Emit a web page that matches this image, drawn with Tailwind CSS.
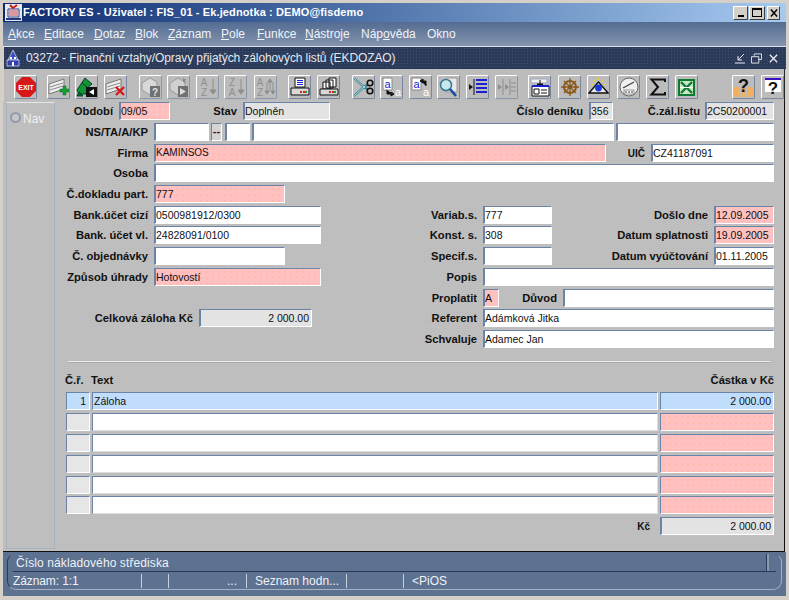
<!DOCTYPE html>
<html lang="en">
<head>
    <meta charset="UTF-8">
    <script src="https://cdn.jsdelivr.net/npm/@tailwindcss/browser@4"></script>
    <title>FACTORY ES</title>
</head>
<body class="w-[789px] h-[600px] overflow-hidden bg-[#d4d0c8] font-['Liberation_Sans',Arial,sans-serif] text-[11px] text-[#111]">
<div class="pt-[3px] pl-[3px] h-[600px] flex flex-col">

    <!-- Application title bar -->
    <div class="h-[19px] mr-[3px] flex items-center bg-gradient-to-r from-[#0f2a70] via-[#5579ae] to-[#a6caf0]">
        <svg class="w-[17px] h-[17px] ml-[2px]" viewBox="0 0 17 17">
            <rect width="17" height="17" fill="#e8e8e8"/>
            <path d="M3 5h11v8H3z" fill="#fff" stroke="#223a80"/>
            <path d="M4 7h9M4 9h9M4 11h9" stroke="#c03040"/>
            <path d="M5 1l3 3 4-3" stroke="#c02020" fill="none" stroke-width="2"/>
            <path d="M1 14h15v2H1z" fill="#223a80"/>
        </svg>
        <span class="ml-[1px] text-white font-bold text-[11px] tracking-[0.12px]">FACTORY ES - Uživatel : FIS_01 - Ek.jednotka : DEMO@fisdemo</span>
        <div class="ml-auto mr-[6px] flex">
            <div class="w-[15px] h-[14px] bg-[#d4d0c8] border border-t-white border-l-white border-r-[#404040] border-b-[#404040] flex items-end justify-center pb-[2px]"><div class="w-[6px] h-[2px] bg-black"></div></div>
            <div class="w-[16px] h-[14px] ml-[1px] bg-[#d4d0c8] border border-t-white border-l-white border-r-[#404040] border-b-[#404040] flex items-center justify-center"><div class="w-[10px] h-[9px] border border-black border-t-2"></div></div>
            <div class="w-[13px] h-[14px] ml-[2px] bg-[#d4d0c8] border border-t-white border-l-white border-r-[#404040] border-b-[#404040] flex items-center justify-center">
                <svg class="w-[8px] h-[8px]" viewBox="0 0 9 8"><path d="M1 0l7 8M8 0L1 8" stroke="#000" stroke-width="1.6"/></svg>
            </div>
        </div>
    </div>

    <!-- Menu -->
    <div class="h-[25px] mr-[3px] flex items-center bg-gradient-to-b from-[#546c92] to-[#8494ad] border-b border-[#dfe3ea] text-[12px] text-[#f0f3f7]">
        <span class="ml-[5px] w-[36px]"><u>A</u>kce</span>
        <span class="w-[50px]"><u>E</u>ditace</span>
        <span class="w-[41px]"><u>D</u>otaz</span>
        <span class="w-[33px]"><u>B</u>lok</span>
        <span class="w-[53px]"><u>Z</u>áznam</span>
        <span class="w-[36px]"><u>P</u>ole</span>
        <span class="w-[48px]"><u>F</u>unkce</span>
        <span class="w-[56px]"><u>N</u>ástroje</span>
        <span class="w-[66px]">Náp<u>o</u>věda</span>
        <span>Okno</span>
    </div>

    <!-- Form window title -->
    <div class="h-[22px] mr-[3px] ml-[1px] flex items-center bg-[#2b3a58] bg-[radial-gradient(#3e5074_0.6px,transparent_0.8px)] bg-[size:3px_3px] text-[12px] text-[#e4e8ee]">
        <svg class="w-[14px] h-[17px] ml-[2px]" viewBox="0 0 14 17">
            <path d="M7 0L2 10h10z" fill="#3a50c0" stroke="#fff" stroke-width=".6"/>
            <rect x="1" y="10" width="12" height="6" fill="#3040b0" stroke="#fff" stroke-width=".6"/>
            <path d="M4 7h2v2H4zM8 7h2v2H8zM6 12h2v4H6z" fill="#fff"/>
        </svg>
        <span class="ml-[6px] tracking-[-0.1px]">03272 - Finanční vztahy/Opravy přijatých zálohových listů (EKDOZAO)</span>
        <div class="ml-auto mr-[8px] flex items-center">
            <svg class="w-[10px] h-[11px]" viewBox="0 0 10 11"><path d="M0 10h10M9 1L3 7M3 3v4h4" stroke="#e8ecf2" fill="none"/></svg>
            <svg class="w-[11px] h-[11px] ml-[6px]" viewBox="0 0 12 11"><path d="M3.5 2.5V.5h8v6h-3M.5 3.5h8v7h-8z" stroke="#e8ecf2" fill="none"/></svg>
            <svg class="w-[9px] h-[9px] ml-[7px]" viewBox="0 0 11 11"><path d="M1 1l9 9M10 1l-9 9" stroke="#e8ecf2" stroke-width="1.6"/></svg>
        </div>
    </div>

    <!-- Toolbar -->
    <div class="h-[32px] w-[781px] ml-[1px] bg-[#bcbcbc] border-r border-[#20242c] overflow-hidden flex items-center">
        <div class="flex items-center h-[24px] mt-[4px]">
            <div class="ml-[10px] w-[23px] h-[24px] rounded-[2px] border border-t-white border-l-white border-r-[#76879f] border-b-[#76879f] flex items-center justify-center">
                <svg class="w-[20px] h-[20px]" viewBox="0 0 20 20"><path d="M6 0h8l6 6v8l-6 6H6l-6-6V6z" fill="#d81818"/><text x="10" y="12.5" text-anchor="middle" font-size="7" font-weight="700" fill="#fff" font-family="Liberation Sans">EXIT</text></svg>
            </div>
            <div class="ml-[10px] w-[23px] h-[24px] rounded-[2px] border border-t-white border-l-white border-r-[#76879f] border-b-[#76879f] flex items-center justify-center">
                <svg class="w-[21px] h-[20px]" viewBox="0 0 21 20"><path d="M1 7l15-5v10L1 17z" fill="#eee" stroke="#777"/><path d="M2 10l13-4M2 13l13-4" stroke="#888"/><path d="M12 12h3V9h3v3h3v3h-3v3h-3v-3h-3z" fill="#18a028" stroke="#064" stroke-width=".5"/></svg>
            </div>
            <div class="ml-[5px] w-[23px] h-[24px] rounded-[2px] border border-t-white border-l-white border-r-[#76879f] border-b-[#76879f] flex items-center justify-center">
                <svg class="w-[21px] h-[21px]" viewBox="0 0 21 21"><path d="M1 13L9 1l7 6-3 2-1 8H3z" fill="#149438" stroke="#064020"/><path d="M3 15l-2 4h6zM6 6l5 4" stroke="#042" fill="#063"/><rect x="10" y="10" width="11" height="10" fill="#111"/><path d="M13 15l5-3v6z" fill="#fff"/></svg>
            </div>
            <div class="ml-[6px] w-[23px] h-[24px] rounded-[2px] border border-t-white border-l-white border-r-[#76879f] border-b-[#76879f] flex items-center justify-center">
                <svg class="w-[21px] h-[20px]" viewBox="0 0 21 20"><path d="M1 7l15-5v10L1 17z" fill="#eee" stroke="#777"/><path d="M2 10l13-4M2 13l13-4" stroke="#888"/><path d="M11 10l8 8M19 10l-8 8" stroke="#d81818" stroke-width="2.4"/></svg>
            </div>
            <div class="ml-[12px] w-[23px] h-[24px] rounded-[2px] border border-t-white border-l-white border-r-[#8a97aa] border-b-[#8a97aa] flex items-center justify-center">
                <svg class="w-[21px] h-[20px]" viewBox="0 0 21 20"><path d="M2 6l8-5 7 4v7l-7 6-8-5z" fill="#d8d8d8" stroke="#999"/><rect x="10" y="9" width="10" height="11" fill="#707070"/><text x="15" y="18.5" text-anchor="middle" font-size="10" font-weight="700" fill="#e0e0e0" font-family="Liberation Sans">?</text></svg>
            </div>
            <div class="ml-[5px] w-[23px] h-[24px] rounded-[2px] border border-t-white border-l-white border-r-[#8a97aa] border-b-[#8a97aa] flex items-center justify-center">
                <svg class="w-[21px] h-[20px]" viewBox="0 0 21 20"><path d="M2 6l8-5 7 4v7l-7 6-8-5z" fill="#d0d0d0" stroke="#999"/><path d="M15 0l1 2h2l-1 2 1 2-3-1z" fill="#888"/><rect x="10" y="9" width="10" height="11" fill="#707070"/><path d="M12 11l6 3.5-6 3.5z" fill="#ddd"/></svg>
            </div>
            <div class="ml-[6px] w-[23px] h-[24px] rounded-[2px] border border-t-white border-l-white border-r-[#8a97aa] border-b-[#8a97aa] flex items-center justify-center">
                <svg class="w-[20px] h-[20px]" viewBox="0 0 20 20"><text x="6" y="9" text-anchor="middle" font-size="10" fill="#8e8e8e" font-family="Liberation Sans">A</text><text x="6" y="19" text-anchor="middle" font-size="10" fill="#8e8e8e" font-family="Liberation Sans">Z</text><path d="M15 2v14M12 13l3 4 3-4z" stroke="#8e8e8e" fill="#8e8e8e"/></svg>
            </div>
            <div class="ml-[5px] w-[23px] h-[24px] rounded-[2px] border border-t-white border-l-white border-r-[#8a97aa] border-b-[#8a97aa] flex items-center justify-center">
                <svg class="w-[20px] h-[20px]" viewBox="0 0 20 20"><text x="6" y="9" text-anchor="middle" font-size="10" fill="#8e8e8e" font-family="Liberation Sans">Z</text><text x="6" y="19" text-anchor="middle" font-size="10" fill="#8e8e8e" font-family="Liberation Sans">A</text><path d="M15 2v14M12 13l3 4 3-4z" stroke="#8e8e8e" fill="#8e8e8e"/></svg>
            </div>
            <div class="ml-[7px] w-[23px] h-[24px] rounded-[2px] border border-t-white border-l-white border-r-[#8a97aa] border-b-[#8a97aa] flex items-center justify-center">
                <svg class="w-[21px] h-[20px]" viewBox="0 0 21 20"><text x="5" y="9" text-anchor="middle" font-size="10" fill="#8e8e8e" font-family="Liberation Sans">A</text><text x="5" y="19" text-anchor="middle" font-size="10" fill="#8e8e8e" font-family="Liberation Sans">Z</text><path d="M12 5v12M10 14l2 3 2-3zM15 2v12M13 5l2-3 2 3zM18 5v12M16 14l2 3 2-3z" stroke="#8e8e8e" fill="#8e8e8e"/></svg>
            </div>
            <div class="ml-[11px] w-[23px] h-[24px] rounded-[2px] border border-t-white border-l-white border-r-[#76879f] border-b-[#76879f] flex items-center justify-center">
                <svg class="w-[20px] h-[20px]" viewBox="0 0 20 20"><path d="M5 1h10v9H5z" fill="#fff" stroke="#111"/><path d="M7 3.5h6M7 5.5h6M7 7.5h6" stroke="#1a20d0"/><path d="M1 11h18v7H1z" fill="#d8d8d8" stroke="#111"/><path d="M10 15h2M13 15h2" stroke="#e02020" stroke-width="2"/><path d="M15 15h2" stroke="#18a028" stroke-width="2"/></svg>
            </div>
            <div class="ml-[6px] w-[23px] h-[24px] rounded-[2px] border border-t-white border-l-white border-r-[#76879f] border-b-[#76879f] flex items-center justify-center">
                <svg class="w-[20px] h-[20px]" viewBox="0 0 20 20"><path d="M10 1l7 0v9h-7zM7 3h7v8H7zM4 5h7v7H4z" fill="#fff" stroke="#111"/><path d="M1 12h18v6H1z" fill="#d8d8d8" stroke="#111"/><path d="M10 15h2M13 15h2" stroke="#e02020" stroke-width="2"/><path d="M15 15h2" stroke="#18a028" stroke-width="2"/></svg>
            </div>
            <div class="ml-[12px] w-[23px] h-[24px] rounded-[2px] border border-t-white border-l-white border-r-[#76879f] border-b-[#76879f] flex items-center justify-center">
                <svg class="w-[21px] h-[20px]" viewBox="0 0 21 20"><path d="M1 1l11 10 3 1M1 19l11-10 3-1" fill="none" stroke="#2e7f90" stroke-width="2.200"/><path d="M1 1l11 10M1 19l11-10" stroke="#d8f0f4" stroke-width=".8"/><circle cx="17" cy="6" r="2.800" fill="none" stroke="#111" stroke-width="1.600"/><circle cx="17" cy="14" r="2.800" fill="none" stroke="#111" stroke-width="1.600"/></svg>
            </div>
            <div class="ml-[5px] w-[23px] h-[24px] rounded-[2px] border border-t-white border-l-white border-r-[#76879f] border-b-[#76879f] flex items-center justify-center">
                <svg class="w-[21px] h-[20px]" viewBox="0 0 21 20"><path d="M2 1h9v12H2z" fill="#fff" stroke="#888"/><text x="6.5" y="11" text-anchor="middle" font-size="11" fill="#1a20d0" font-family="Liberation Sans">a</text><path d="M6 13v4h6M10 15l3 2-3 2z" stroke="#111" fill="#111"/><text x="17" y="19" text-anchor="middle" font-size="11" fill="#fff" font-family="Liberation Sans">a</text></svg>
            </div>
            <div class="ml-[6px] w-[23px] h-[24px] rounded-[2px] border border-t-white border-l-white border-r-[#76879f] border-b-[#76879f] flex items-center justify-center">
                <svg class="w-[21px] h-[20px]" viewBox="0 0 21 20"><path d="M2 1h9v12H2z" fill="#fff" stroke="#888"/><text x="6.5" y="11" text-anchor="middle" font-size="11" fill="#1a20d0" font-family="Liberation Sans">a</text><path d="M16 9V4h-5M13 2l-3 2 3 2z" stroke="#111" fill="#111"/><text x="16" y="19" text-anchor="middle" font-size="11" fill="#fff" font-family="Liberation Sans">a</text></svg>
            </div>
            <div class="ml-[5px] w-[23px] h-[24px] rounded-[2px] border border-t-white border-l-white border-r-[#76879f] border-b-[#76879f] flex items-center justify-center">
                <svg class="w-[21px] h-[20px]" viewBox="0 0 21 20"><path d="M8 1h11v14H8z" fill="#e8e8e8" stroke="#999"/><circle cx="8" cy="8" r="5.5" fill="#c8e8f0" stroke="#3a7a90" stroke-width="1.6"/><path d="M12 12l6 7" stroke="#1a4aa0" stroke-width="2.6"/></svg>
            </div>
            <div class="ml-[6px] w-[23px] h-[24px] rounded-[2px] border border-t-white border-l-white border-r-[#76879f] border-b-[#76879f] flex items-center justify-center">
                <svg class="w-[20px] h-[20px]" viewBox="0 0 20 20"><path d="M6 2v16" stroke="#111"/><path d="M1 7l4 3-4 3z" fill="#111"/><path d="M8 3h11M8 7h11M8 11h11M8 15h11" stroke="#1a20d0" stroke-width="2"/></svg>
            </div>
            <div class="ml-[6px] w-[23px] h-[24px] rounded-[2px] border border-t-white border-l-white border-r-[#8a97aa] border-b-[#8a97aa] flex items-center justify-center">
                <svg class="w-[20px] h-[20px]" viewBox="0 0 20 20"><path d="M6 2v16M13 2v16" stroke="#8e8e8e"/><path d="M1 7l4 3-4 3zM8 7l4 3-4 3z" fill="#8e8e8e"/><path d="M14 6h5M14 10h5M14 14h5" stroke="#8e8e8e"/></svg>
            </div>
            <div class="ml-[10px] w-[23px] h-[24px] rounded-[2px] border border-t-white border-l-white border-r-[#76879f] border-b-[#76879f] flex items-center justify-center">
                <svg class="w-[20px] h-[20px]" viewBox="0 0 20 20"><path d="M1 2h16v4H1z" fill="#f0f0f0" stroke="#a0a8c0"/><path d="M2 9h17v10H2z" fill="#fff" stroke="#111"/><path d="M10 3v6M7 7l3 3 3-3z" stroke="#111" fill="#111"/><path d="M2 9h17" stroke="#1a20d0" stroke-width="2"/><path d="M4 12h5v5H4zM11 13h6M11 16h6" stroke="#111" fill="none"/></svg>
            </div>
            <div class="ml-[7px] w-[23px] h-[24px] rounded-[2px] border border-t-white border-l-white border-r-[#76879f] border-b-[#76879f] flex items-center justify-center">
                <svg class="w-[20px] h-[20px]" viewBox="0 0 20 20"><circle cx="10" cy="10" r="6" fill="none" stroke="#8a5a1a" stroke-width="2"/><path d="M10 1v18M1 10h18M4 4l12 12M16 4L4 16" stroke="#8a5a1a" stroke-width="1.3"/><circle cx="10" cy="10" r="2" fill="#8a5a1a"/></svg>
            </div>
            <div class="ml-[6px] w-[23px] h-[24px] rounded-[2px] border border-t-white border-l-white border-r-[#76879f] border-b-[#76879f] flex items-center justify-center">
                <svg class="w-[21px] h-[20px]" viewBox="0 0 21 20"><path d="M10.5 5L1 16h19z" fill="#e8e8e8" stroke="#111" stroke-width="1.4"/><circle cx="10.5" cy="11" r="3.4" fill="#1838d8"/><path d="M3 6l2 2M18 6l-2 2M10.5 1v2M6 3l1 2M15 3l-1 2" stroke="#f0d820"/></svg>
            </div>
            <div class="ml-[7px] w-[23px] h-[24px] rounded-[2px] border border-t-white border-l-white border-r-[#76879f] border-b-[#76879f] flex items-center justify-center">
                <svg class="w-[20px] h-[20px]" viewBox="0 0 20 20"><circle cx="10" cy="10" r="9" fill="#f0f0f0" stroke="#666"/><path d="M4 11L15 5" stroke="#444" stroke-width="1.4"/><rect x="5" y="13" width="10" height="4" fill="#fff" stroke="#555" stroke-width=".6"/><path d="M7 14v2M10 14v2M13 14v2" stroke="#333"/></svg>
            </div>
            <div class="ml-[6px] w-[23px] h-[24px] rounded-[2px] border border-t-white border-l-white border-r-[#76879f] border-b-[#76879f] flex items-center justify-center">
                <svg class="w-[20px] h-[20px]" viewBox="0 0 20 20"><path d="M17 5V2.500H3.500L10 10l-6.500 7.500H17V15" fill="none" stroke="#111" stroke-width="2"/></svg>
            </div>
            <div class="ml-[6px] w-[23px] h-[24px] rounded-[2px] border border-t-white border-l-white border-r-[#76879f] border-b-[#76879f] flex items-center justify-center">
                <svg class="w-[19px] h-[19px]" viewBox="0 0 19 19"><rect x="1" y="1" width="17" height="17" fill="#0e7a30"/><rect x="3" y="3" width="13" height="13" fill="#c8e8c8"/><path d="M4 4l11 11M15 4L4 15" stroke="#0e7a30" stroke-width="2.400"/><path d="M3 9.500h13" stroke="#fff"/></svg>
            </div>
            <div class="ml-[34px] w-[23px] h-[24px] rounded-[2px] border border-t-white border-l-white border-r-[#76879f] border-b-[#76879f] flex items-center justify-center">
                <svg class="w-[21px] h-[21px]" viewBox="0 0 21 21"><rect x="1" y="10" width="5" height="10" rx="1" fill="#f0b060"/><rect x="8" y="11" width="5" height="9" rx="1" fill="#f0b060"/><rect x="15" y="10" width="5" height="10" rx="1" fill="#f0b060"/><text x="10.500" y="15" text-anchor="middle" font-size="18" font-weight="700" fill="#111" font-family="Liberation Sans">?</text></svg>
            </div>
            <div class="ml-[6px] w-[23px] h-[24px] rounded-[2px] border border-t-white border-l-white border-r-[#76879f] border-b-[#76879f] flex items-center justify-center shrink-0">
                <svg class="w-[20px] h-[20px]" viewBox="0 0 20 20"><rect x="2" y="1" width="16" height="14" fill="#fff"/><path d="M2 2h16" stroke="#3810c0" stroke-width="2"/><text x="10" y="17" text-anchor="middle" font-size="17" font-weight="700" fill="#111" font-family="Liberation Sans">?</text></svg>
            </div>
        </div>
    </div>

    <!-- Nav column + form -->
    <div class="h-[451px] w-[782px] flex bg-[#bdbdbd] bg-[repeating-linear-gradient(0deg,#bcbcbc_0,#bcbcbc_1px,#c0c0c0_1px,#c0c0c0_2px)] border-r border-b border-[#101010]">
        <div class="w-[49px] ml-[3px] mt-[1px] h-[447px] border border-[#a6b1c2] border-t-[#e4e4e4] pt-[7px] pl-[3px] flex items-start">
            <div class="w-[11px] h-[11px] rounded-full bg-[#c6c6c6] border-2 border-[#8f9bac] mt-[2px]"></div>
            <span class="ml-[2px] text-[12px] text-[#eef0f4]">Nav</span>
        </div>

        <div class="w-[718px] ml-[1px] font-bold text-[11.2px]">
            <!-- Header block -->
            <div class="flex h-[18px] mt-[1px] items-center">
                <div class="w-[57px] text-right mr-[6px]">Období</div>
                <div class="w-[51px] h-[18px] border border-t-[#6b83a6] border-l-2 border-l-[#6b83a6] border-r-white border-b-white bg-[#ffc0c0] bg-[radial-gradient(#ffb09a_0.6px,transparent_0.8px)] bg-[size:6px_6px] font-normal text-[10.5px] leading-[16px]">09/05</div>
                <div class="w-[67px] text-right mr-[6px]">Stav</div>
                <div class="w-[87px] h-[18px] border border-t-[#6b83a6] border-l-2 border-l-[#6b83a6] border-r-white border-b-white bg-[#e3e3e3] font-normal text-[10.5px] leading-[16px]">Doplněn</div>
                <div class="w-[253px] text-right mr-[6px]">Číslo deníku</div>
                <div class="w-[24px] h-[18px] border border-t-[#6b83a6] border-l-2 border-l-[#6b83a6] border-r-white border-b-white bg-[#e3e3e3] font-normal text-[10.5px] leading-[16px]">356</div>
                <div class="w-[87px] text-right mr-[5px]">Č.zál.listu</div>
                <div class="w-[69px] h-[18px] border border-t-[#6b83a6] border-l-2 border-l-[#6b83a6] border-r-white border-b-white bg-[#e3e3e3] font-normal text-[10.5px] leading-[16px]">2C50200001</div>
            </div>
            <div class="flex h-[18px] mt-[3px] items-center">
                <div class="w-[92px] text-right mr-[6px]">NS/TA/A/KP</div>
                <div class="w-[55px] h-[18px] border border-t-[#6b83a6] border-l-2 border-l-[#6b83a6] border-r-white border-b-white bg-white"></div>
                <div class="w-[11px] h-[18px] ml-[2px] border border-t-[#6b83a6] border-l-[#6b83a6] border-r-white border-b-white bg-[#d4d4d4] text-center leading-[14px] text-[#401010]">--</div>
                <div class="w-[25px] h-[18px] ml-[3px] border border-t-[#6b83a6] border-l-2 border-l-[#6b83a6] border-r-white border-b-white bg-white"></div>
                <div class="w-[362px] h-[18px] ml-[2px] border border-t-[#6b83a6] border-l-2 border-l-[#6b83a6] border-r-white border-b-white bg-white"></div>
                <div class="w-[158px] h-[18px] ml-[2px] border border-t-[#6b83a6] border-l-2 border-l-[#6b83a6] border-r-white border-b-white bg-white"></div>
            </div>
            <div class="flex h-[18px] mt-[3px] items-center">
                <div class="w-[92px] text-right mr-[6px]">Firma</div>
                <div class="w-[452px] h-[18px] border border-t-[#6b83a6] border-l-2 border-l-[#6b83a6] border-r-white border-b-white bg-[#ffc0c0] bg-[radial-gradient(#ffb09a_0.6px,transparent_0.8px)] bg-[size:6px_6px] font-normal text-[10px] leading-[16px]">KAMINSOS</div>
                <div class="w-[39px] text-right mr-[6px] text-[10px]">UIČ</div>
                <div class="w-[123px] h-[18px] border border-t-[#6b83a6] border-l-2 border-l-[#6b83a6] border-r-white border-b-white bg-white font-normal text-[10.5px] leading-[16px]">CZ41187091</div>
            </div>
            <div class="flex h-[18px] mt-[2px] items-center">
                <div class="w-[92px] text-right mr-[6px]">Osoba</div>
                <div class="w-[620px] h-[18px] border border-t-[#6b83a6] border-l-2 border-l-[#6b83a6] border-r-white border-b-white bg-white"></div>
            </div>
            <div class="flex h-[18px] mt-[3px] items-center">
                <div class="w-[92px] text-right mr-[6px] whitespace-nowrap">Č.dokladu part.</div>
                <div class="w-[131px] h-[18px] border border-t-[#6b83a6] border-l-2 border-l-[#6b83a6] border-r-white border-b-white bg-[#ffc0c0] bg-[radial-gradient(#ffb09a_0.6px,transparent_0.8px)] bg-[size:6px_6px] font-normal text-[10.5px] leading-[16px]">777</div>
            </div>
            <div class="flex h-[18px] mt-[3px] items-center">
                <div class="w-[92px] text-right mr-[6px]">Bank.účet cizí</div>
                <div class="w-[167px] h-[18px] border border-t-[#6b83a6] border-l-2 border-l-[#6b83a6] border-r-white border-b-white bg-white font-normal text-[10.5px] leading-[16px]">0500981912/0300</div>
                <div class="w-[156px] text-right mr-[6px]">Variab.s.</div>
                <div class="w-[69px] h-[18px] border border-t-[#6b83a6] border-l-2 border-l-[#6b83a6] border-r-white border-b-white bg-white font-normal text-[10.5px] leading-[16px]">777</div>
                <div class="w-[156px] text-right mr-[6px]">Došlo dne</div>
                <div class="w-[60px] h-[18px] border border-t-[#6b83a6] border-l-2 border-l-[#6b83a6] border-r-white border-b-white bg-[#ffc0c0] font-normal text-[10.5px] leading-[16px]">12.09.2005</div>
            </div>
            <div class="flex h-[18px] mt-[2px] items-center">
                <div class="w-[92px] text-right mr-[6px]">Bank. účet vl.</div>
                <div class="w-[167px] h-[18px] border border-t-[#6b83a6] border-l-2 border-l-[#6b83a6] border-r-white border-b-white bg-white font-normal text-[10.5px] leading-[16px]">24828091/0100</div>
                <div class="w-[156px] text-right mr-[6px]">Konst. s.</div>
                <div class="w-[69px] h-[18px] border border-t-[#6b83a6] border-l-2 border-l-[#6b83a6] border-r-white border-b-white bg-white font-normal text-[10.5px] leading-[16px]">308</div>
                <div class="w-[156px] text-right mr-[6px]">Datum splatnosti</div>
                <div class="w-[60px] h-[18px] border border-t-[#6b83a6] border-l-2 border-l-[#6b83a6] border-r-white border-b-white bg-[#ffc0c0] font-normal text-[10.5px] leading-[16px]">19.09.2005</div>
            </div>
            <div class="flex h-[18px] mt-[3px] items-center">
                <div class="w-[92px] text-right mr-[6px]">Č. objednávky</div>
                <div class="w-[131px] h-[18px] border border-t-[#6b83a6] border-l-2 border-l-[#6b83a6] border-r-white border-b-white bg-white"></div>
                <div class="w-[192px] text-right mr-[6px]">Specif.s.</div>
                <div class="w-[69px] h-[18px] border border-t-[#6b83a6] border-l-2 border-l-[#6b83a6] border-r-white border-b-white bg-white"></div>
                <div class="w-[156px] text-right mr-[6px]">Datum vyúčtování</div>
                <div class="w-[60px] h-[18px] border border-t-[#6b83a6] border-l-2 border-l-[#6b83a6] border-r-white border-b-white bg-white font-normal text-[10.5px] leading-[16px]">01.11.2005</div>
            </div>
            <div class="flex h-[18px] mt-[3px] items-center">
                <div class="w-[92px] text-right mr-[6px]">Způsob úhrady</div>
                <div class="w-[167px] h-[18px] border border-t-[#6b83a6] border-l-2 border-l-[#6b83a6] border-r-white border-b-white bg-[#ffc0c0] bg-[radial-gradient(#ffb09a_0.6px,transparent_0.8px)] bg-[size:6px_6px] font-normal text-[10.5px] leading-[16px]">Hotovostí</div>
                <div class="w-[156px] text-right mr-[6px]">Popis</div>
                <div class="w-[291px] h-[18px] border border-t-[#6b83a6] border-l-2 border-l-[#6b83a6] border-r-white border-b-white bg-white"></div>
            </div>
            <div class="flex h-[18px] mt-[3px] items-center">
                <div class="w-[421px] text-right mr-[6px]">Proplatit</div>
                <div class="w-[16px] h-[18px] border border-t-[#6b83a6] border-l-2 border-l-[#6b83a6] border-r-white border-b-white bg-[#ffc0c0] font-normal text-[10.5px] leading-[16px]">A</div>
                <div class="w-[58px] text-right mr-[6px]">Důvod</div>
                <div class="w-[211px] h-[18px] border border-t-[#6b83a6] border-l-2 border-l-[#6b83a6] border-r-white border-b-white bg-white"></div>
            </div>
            <div class="flex h-[18px] mt-[2px] items-center">
                <div class="w-[137px] text-right mr-[6px]">Celková záloha Kč</div>
                <div class="w-[113px] h-[18px] border border-t-[#6b83a6] border-l-2 border-l-[#6b83a6] border-r-white border-b-white bg-[#e3e3e3] pr-[2px] text-right font-normal text-[10.5px] leading-[16px]">2 000.00</div>
                <div class="w-[165px] text-right mr-[6px]">Referent</div>
                <div class="w-[291px] h-[18px] border border-t-[#6b83a6] border-l-2 border-l-[#6b83a6] border-r-white border-b-white bg-white font-normal text-[10.5px] leading-[16px]">Adámková Jitka</div>
            </div>
            <div class="flex h-[18px] mt-[3px] items-center">
                <div class="w-[421px] text-right mr-[6px]">Schvaluje</div>
                <div class="w-[291px] h-[18px] border border-t-[#6b83a6] border-l-2 border-l-[#6b83a6] border-r-white border-b-white bg-white font-normal text-[10.5px] leading-[16px]">Adamec Jan</div>
            </div>

            <div class="ml-[12px] w-[702px] h-[2px] mt-[13px] bg-[#eeeeee] border-b border-[#a8a8a8]"></div>

            <!-- Detail lines -->
            <div class="flex h-[14px] mt-[10px] items-center">
                <div class="ml-[9px] w-[26px]">Č.ř.</div>
                <div>Text</div>
                <div class="ml-auto w-[100px] text-right">Částka v Kč</div>
            </div>
            <div class="flex h-[18px] mt-[5px] ml-[10px] font-normal text-[10.5px] leading-[16px]">
                <div class="w-[24px] border border-t-[#6b83a6] border-l-[#6b83a6] border-r-white border-b-white bg-[#c0defc] text-right pr-[3px]">1</div>
                <div class="w-[566px] ml-[2px] border border-t-[#6b83a6] border-l-[#6b83a6] border-r-white border-b-white bg-[#c0defc] pl-[1px]">Záloha</div>
                <div class="w-[114px] ml-[2px] border border-t-[#6b83a6] border-l-[#6b83a6] border-r-white border-b-white bg-[#c0defc] text-right pr-[2px]">2 000.00</div>
            </div>
            <div class="flex h-[18px] mt-[3px] ml-[10px]">
                <div class="w-[24px] border border-t-[#6b83a6] border-l-[#6b83a6] border-r-white border-b-white bg-[#e6e6e6]"></div>
                <div class="w-[566px] ml-[2px] border border-t-[#6b83a6] border-l-[#6b83a6] border-r-[#ddd] border-b-[#ddd] bg-white"></div>
                <div class="w-[114px] ml-[2px] border border-t-[#6b83a6] border-l-[#6b83a6] border-r-white border-b-white bg-[#ffc0c0] bg-[radial-gradient(#ffb09a_0.6px,transparent_0.8px)] bg-[size:6px_6px]"></div>
            </div>
            <div class="flex h-[18px] mt-[3px] ml-[10px]">
                <div class="w-[24px] border border-t-[#6b83a6] border-l-[#6b83a6] border-r-white border-b-white bg-[#e6e6e6]"></div>
                <div class="w-[566px] ml-[2px] border border-t-[#6b83a6] border-l-[#6b83a6] border-r-[#ddd] border-b-[#ddd] bg-white"></div>
                <div class="w-[114px] ml-[2px] border border-t-[#6b83a6] border-l-[#6b83a6] border-r-white border-b-white bg-[#ffc0c0] bg-[radial-gradient(#ffb09a_0.6px,transparent_0.8px)] bg-[size:6px_6px]"></div>
            </div>
            <div class="flex h-[18px] mt-[3px] ml-[10px]">
                <div class="w-[24px] border border-t-[#6b83a6] border-l-[#6b83a6] border-r-white border-b-white bg-[#e6e6e6]"></div>
                <div class="w-[566px] ml-[2px] border border-t-[#6b83a6] border-l-[#6b83a6] border-r-[#ddd] border-b-[#ddd] bg-white"></div>
                <div class="w-[114px] ml-[2px] border border-t-[#6b83a6] border-l-[#6b83a6] border-r-white border-b-white bg-[#ffc0c0] bg-[radial-gradient(#ffb09a_0.6px,transparent_0.8px)] bg-[size:6px_6px]"></div>
            </div>
            <div class="flex h-[18px] mt-[3px] ml-[10px]">
                <div class="w-[24px] border border-t-[#6b83a6] border-l-[#6b83a6] border-r-white border-b-white bg-[#e6e6e6]"></div>
                <div class="w-[566px] ml-[2px] border border-t-[#6b83a6] border-l-[#6b83a6] border-r-[#ddd] border-b-[#ddd] bg-white"></div>
                <div class="w-[114px] ml-[2px] border border-t-[#6b83a6] border-l-[#6b83a6] border-r-white border-b-white bg-[#ffc0c0] bg-[radial-gradient(#ffb09a_0.6px,transparent_0.8px)] bg-[size:6px_6px]"></div>
            </div>
            <div class="flex h-[18px] mt-[2px] ml-[10px]">
                <div class="w-[24px] border border-t-[#6b83a6] border-l-[#6b83a6] border-r-white border-b-white bg-[#e6e6e6]"></div>
                <div class="w-[566px] ml-[2px] border border-t-[#6b83a6] border-l-[#6b83a6] border-r-[#ddd] border-b-[#ddd] bg-white"></div>
                <div class="w-[114px] ml-[2px] border border-t-[#6b83a6] border-l-[#6b83a6] border-r-white border-b-white bg-[#ffc0c0] bg-[radial-gradient(#ffb09a_0.6px,transparent_0.8px)] bg-[size:6px_6px]"></div>
            </div>
            <div class="flex h-[18px] mt-[3px] items-center">
                <div class="w-[594px] text-right text-[10px]">Kč</div>
                <div class="w-[114px] h-[18px] ml-[10px] border border-t-[#6b83a6] border-l-2 border-l-[#6b83a6] border-r-white border-b-white bg-[#e3e3e3] pr-[2px] text-right font-normal text-[10.5px] leading-[16px]">2 000.00</div>
            </div>
        </div>
    </div>

    <!-- Status bar -->
    <div class="h-[44px] w-[783px] bg-[#5d7191] pt-[1px] px-[4px] text-[12px] text-[#eef2f6]">
        <div class="h-[37px] rounded-[9px] border border-l-[#2b3a58] border-t-[#5d7191] border-r-[#a4b1c4] border-b-[#a4b1c4] pl-[5px] pr-[5px]">
            <div class="h-[18px] flex items-center border-b border-[#2b3a58]">
                <span class="ml-[3px] tracking-[0.1px]">Číslo nákladového střediska</span>
                <div class="ml-auto mr-[7px] h-[17px] border-r-2 border-r-[#8c9ab0] border-l border-l-[#2b3a58]"></div>
            </div>
            <div class="h-[17px] flex items-center">
                <div class="w-[129px] h-[14px] leading-[14px] border-r border-[#c8d0dc] tracking-[-0.1px]">Záznam: 1:1</div>
                <div class="w-[27px] h-[14px] border-r border-[#c8d0dc]"></div>
                <div class="w-[78px] h-[14px] leading-[14px] border-r border-[#c8d0dc] text-right pr-[9px]">...</div>
                <div class="w-[100px] h-[14px] leading-[14px] border-r border-[#c8d0dc] pl-[8px]">Seznam hodn...</div>
                <div class="w-[57px] h-[14px] border-r border-[#c8d0dc]"></div>
                <div class="pl-[8px] leading-[14px]">&lt;PiOS</div>
            </div>
        </div>
    </div>
</div>
</body>
</html>
